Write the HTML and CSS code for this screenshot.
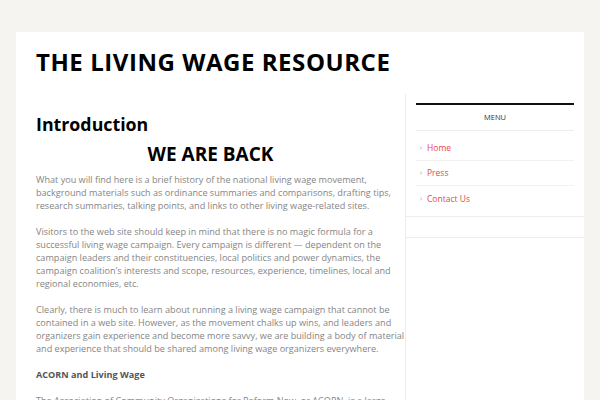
FILE: index.html
```html
<!DOCTYPE html>
<html>
<head>
<meta charset="utf-8">
<link rel="stylesheet" href="styles.css">
</head>
<body>
<div class="site">
  <header class="site-header">
    <h1 class="site-title">THE LIVING WAGE RESOURCE</h1>
  </header>
  <div class="content-wrap">
    <main class="main">
      <h2 class="entry-title">Introduction</h2>
      <h3 class="center-head">WE ARE BACK</h3>
      <p>What you will find here is a brief history of the national living wage movement,<br>background materials such as ordinance summaries and comparisons, drafting tips,<br>research summaries, talking points, and links to other living wage-related sites.</p>
      <p>Visitors to the web site should keep in mind that there is no magic formula for a<br>successful living wage campaign. Every campaign is different — dependent on the<br>campaign leaders and their constituencies, local politics and power dynamics, the<br>campaign coalition’s interests and scope, resources, experience, timelines, local and<br>regional economies, etc.</p>
      <p>Clearly, there is much to learn about running a living wage campaign that cannot be<br>contained in a web site. However, as the movement chalks up wins, and leaders and<br>organizers gain experience and become more savvy, we are building a body of material<br>and experience that should be shared among living wage organizers everywhere.</p>
      <p><strong>ACORN and Living Wage</strong></p>
      <p>The Association of Community Organizations for Reform Now, or ACORN, is a large</p>
    </main>
    <aside class="sidebar">
      <section class="widget">
        <div class="widget-inner">
          <h4 class="widget-title">MENU</h4>
          <ul class="menu">
            <li><span class="bullet">›</span><a href="#">Home</a></li>
            <li><span class="bullet">›</span><a href="#">Press</a></li>
            <li><span class="bullet">›</span><a href="#">Contact Us</a></li>
          </ul>
        </div>
      </section>
      <section class="widget widget-empty"></section>
    </aside>
  </div>
</div>
</body>
</html>
```
FILE: styles.css
```css
html, body {
  margin: 0;
  padding: 0;
}
body {
  background: #f5f4f0;
  font-family: "Open Sans", "DejaVu Sans", sans-serif;
  overflow: hidden;
  height: 400px;
}
.site {
  margin: 32px 16px 0;
  background: #fff;
  height: 368px;
  overflow: hidden;
}
.site-header {
  height: 62px;
  padding: 0 20px 3px;
  box-sizing: border-box;
  display: flex;
  align-items: center;
}
.site-title {
  margin: 0;
  font-family: "Open Sans", sans-serif;
  font-weight: 700;
  font-size: 24px;
  letter-spacing: 0.55px;
  line-height: 1;
  color: #000;
}
.content-wrap {
  display: flex;
  align-items: stretch;
  height: 306px;
}
.main {
  width: 389px;
  flex: none;
  box-sizing: border-box;
  padding: 17px 20px 0;
  overflow: hidden;
}
.entry-title {
  margin: 0;
  font-family: "Open Sans", sans-serif;
  font-weight: 700;
  font-size: 17.8px;
  line-height: 26px;
  color: #000;
}
.center-head {
  margin: 5px 0 7px;
  text-align: center;
  font-family: "Open Sans", sans-serif;
  font-weight: 700;
  font-size: 19px;
  line-height: 24px;
  color: #000;
}
.main p {
  margin: 0 0 13px;
  font-size: 9.1px;
  line-height: 13px;
  color: #858585;
  white-space: nowrap;
}
.main p strong {
  color: #555;
}
.sidebar {
  flex: 1;
  border-left: 1px solid #eee;
  display: flex;
  flex-direction: column;
}
.widget {
  border-bottom: 1px solid #eee;
}
.widget-inner {
  padding: 9px 10px 0;
}
.widget-title {
  margin: 0;
  border-top: 2px solid #111;
  border-bottom: 1px solid #eee;
  text-align: center;
  font-weight: 400;
  font-size: 7.5px;
  line-height: 25px;
  color: #333;
}
.menu {
  list-style: none;
  margin: 0;
  padding: 4px 0 4px;
}
.menu li {
  display: flex;
  align-items: center;
  height: 25.5px;
  border-bottom: 1px solid #f2f2f2;
  box-sizing: border-box;
}
.menu li:last-child {
  border-bottom: none;
}
.bullet {
  width: 11px;
  padding-left: 4px;
  box-sizing: border-box;
  font-size: 7px;
  color: #999;
}
.menu a {
  color: #e8484c;
  text-decoration: none;
  font-size: 8.5px;
}
.widget-empty {
  margin-top: 20px;
  border-top: 1px solid #eee;
  border-bottom: none;
  flex: 1;
}
```
